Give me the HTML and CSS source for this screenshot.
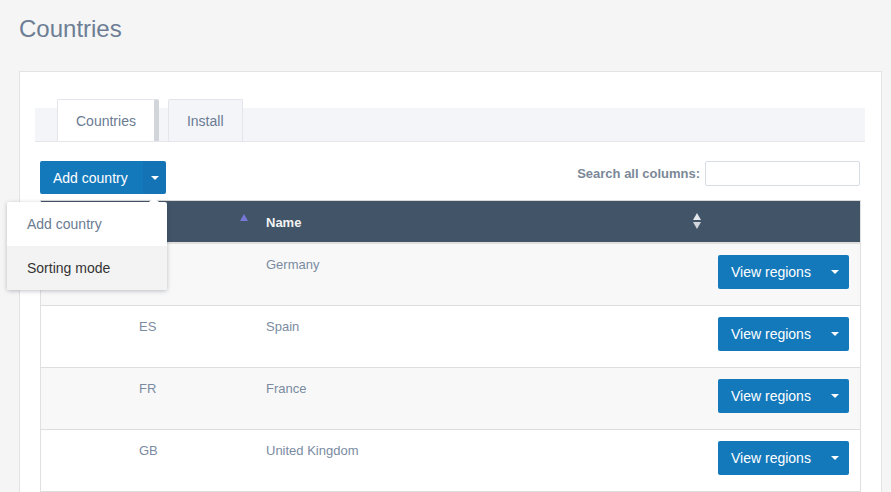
FILE: index.html
```html
<!DOCTYPE html>
<html>
<head>
<meta charset="utf-8">
<title>Countries</title>
<link rel="stylesheet" href="styles.css">
</head>
<body>
<div class="page">
  <h1 class="title">Countries</h1>
  <div class="panel">
    <div class="tabs">
      <div class="tab active">Countries</div>
      <div class="tab">Install</div>
    </div>
    <div class="content">
      <div class="toolbar">
        <div class="btn-group">
          <button class="btn btn-main">Add country</button>
          <button class="btn btn-caret"><span class="caret"></span></button>
          <div class="menu">
            <div class="menu-item">Add country</div>
            <div class="menu-item selected">Sorting mode</div>
          </div>
        </div>
        <label class="search">Search all columns: <input type="text" class="search-input"></label>
      </div>
      <table class="grid">
        <colgroup>
          <col class="c-handle">
          <col class="c-code">
          <col class="c-name">
          <col class="c-actions">
        </colgroup>
        <thead>
          <tr>
            <th></th>
            <th class="th-sort">
              <div class="th-inner end">
                <svg class="sort-asc" width="8" height="7" viewBox="0 0 8 7"><path d="M4 0 L8 7 L0 7 Z" fill="#7677d6"/></svg>
              </div>
            </th>
            <th class="th-name">
              <div class="th-inner">
                <span>Name</span>
                <svg class="sort-both" width="8" height="17" viewBox="0 0 8 17"><path d="M4 0 L8 7 L0 7 Z" fill="#e4e7ec"/><path d="M0 9 L8 9 L4 16 Z" fill="#d3d7dd"/></svg>
              </div>
            </th>
            <th></th>
          </tr>
        </thead>
        <tbody>
          <tr class="odd">
            <td></td><td>DE</td><td>Germany</td>
            <td class="act"><button class="btn btn-view">View regions<span class="caret"></span></button></td>
          </tr>
          <tr>
            <td></td><td>ES</td><td>Spain</td>
            <td class="act"><button class="btn btn-view">View regions<span class="caret"></span></button></td>
          </tr>
          <tr class="odd">
            <td></td><td>FR</td><td>France</td>
            <td class="act"><button class="btn btn-view">View regions<span class="caret"></span></button></td>
          </tr>
          <tr>
            <td></td><td>GB</td><td>United Kingdom</td>
            <td class="act"><button class="btn btn-view">View regions<span class="caret"></span></button></td>
          </tr>
        </tbody>
      </table>
    </div>
  </div>
</div>
</body>
</html>
```
FILE: styles.css
```css
html { overflow: hidden; }
body {
  margin: 0;
  background: #f5f5f5;
  font-family: "Liberation Sans", Arial, sans-serif;
}
.page { padding: 15px 9px 0 19px; }
.title {
  margin: 0 0 28px;
  font-size: 24px;
  line-height: 28px;
  font-weight: normal;
  color: #6c7d94;
}
.panel {
  background: #fff;
  border: 1px solid #e3e3e3;
  border-bottom: none;
  padding: 27px 16px 0 15px;
}
.tabs {
  display: flex;
  align-items: flex-end;
  gap: 9px;
  height: 42px;
  padding-left: 22px;
  background: linear-gradient(to bottom, transparent 9px, #f4f5f9 9px);
  border-bottom: 1px solid #e5e6ea;
}
.tab {
  height: 41px;
  line-height: 43px;
  padding: 0 18px;
  font-size: 14px;
  color: #6a7b92;
  background: #f4f5f9;
  border: 1px solid #e3e5ea;
  border-bottom: none;
  border-radius: 2px 2px 0 0;
}
.tab.active {
  background: #fff;
  border-right: 5px solid #d2d6da;
}
.content { padding: 19px 4px 0 5px; }
.toolbar {
  display: flex;
  justify-content: space-between;
  align-items: flex-start;
}
.btn-group { position: relative; display: flex; }
.btn {
  border: none;
  margin: 0;
  background: #1479bb;
  color: #fff;
  font-family: "Liberation Sans", Arial, sans-serif;
  font-size: 14px;
  height: 33px;
  cursor: pointer;
}
.btn-main {
  width: 103px;
  padding: 0 0 0 13px;
  text-align: left;
  border-radius: 2px 0 0 2px;
}
.btn-caret {
  width: 23px;
  padding: 0;
  background: #1373b4;
  border-radius: 0 2px 2px 0;
  display: flex;
  align-items: center;
  justify-content: center;
}
.caret {
  display: inline-block;
  width: 0;
  height: 0;
  border-left: 4px solid transparent;
  border-right: 4px solid transparent;
  border-top: 4px solid #fff;
}
.menu {
  position: absolute;
  left: -33px;
  top: 41px;
  width: 160px;
  background: #fff;
  border-radius: 2px;
  box-shadow: 0 1px 4px rgba(40, 50, 70, 0.3);
  z-index: 5;
}
.menu::before {
  content: "";
  position: absolute;
  top: -4px;
  left: 142px;
  border-left: 5px solid transparent;
  border-right: 5px solid transparent;
  border-bottom: 4px solid #fff;
}
.menu-item {
  height: 44px;
  line-height: 44px;
  padding-left: 20px;
  font-size: 14px;
  color: #6a7b92;
}
.menu-item.selected {
  background: #f3f3f3;
  color: #333;
  border-radius: 0 0 2px 2px;
}
.search {
  display: flex;
  align-items: center;
  gap: 5px;
  font-size: 13px;
  font-weight: bold;
  color: #7b8898;
  margin-right: 1px;
}
.search-input {
  width: 155px;
  height: 25px;
  box-sizing: border-box;
  border: 1px solid #d6dde5;
  border-radius: 2px;
  margin: 0;
}
.grid {
  margin-top: 6px;
  width: 100%;
  table-layout: fixed;
  border-collapse: separate;
  border-spacing: 0;
  border-left: 1px solid #e0e0e0;
  border-right: 1px solid #e0e0e0;
  font-size: 13px;
}
.c-handle { width: 86px; }
.c-code { width: 127px; }
.c-actions { width: 150px; }
.grid th {
  background: #425468;
  border-top: 1px solid #d9d9d9;
  border-bottom: 2px solid #e2dede;
  padding: 13px 12px 10px;
  line-height: 18px;
  text-align: left;
  color: #f2f2f2;
  font-weight: bold;
}
.grid th.th-sort { padding-right: 6px; }
.grid th.th-name { padding-right: 9px; }
.th-inner {
  display: flex;
  align-items: center;
  justify-content: space-between;
  height: 18px;
}
.th-inner.end { justify-content: flex-end; }
.sort-asc { margin-top: -11px; }
.sort-both { margin-top: -4px; }
.grid td {
  padding: 12px 12px 0;
  line-height: 18px;
  vertical-align: top;
  color: #7a8ba1;
  border-bottom: 1px solid #dedede;
}
.grid tr.odd td { background: #f8f8f8; }
.grid td.act {
  padding: 11px 11px 16px 8px;
  text-align: right;
}
.btn-view {
  display: inline-flex;
  align-items: center;
  width: 131px;
  height: 34px;
  padding: 0 0 0 13px;
  border-radius: 2px;
}
.btn-view .caret { margin-left: 20px; }
```
